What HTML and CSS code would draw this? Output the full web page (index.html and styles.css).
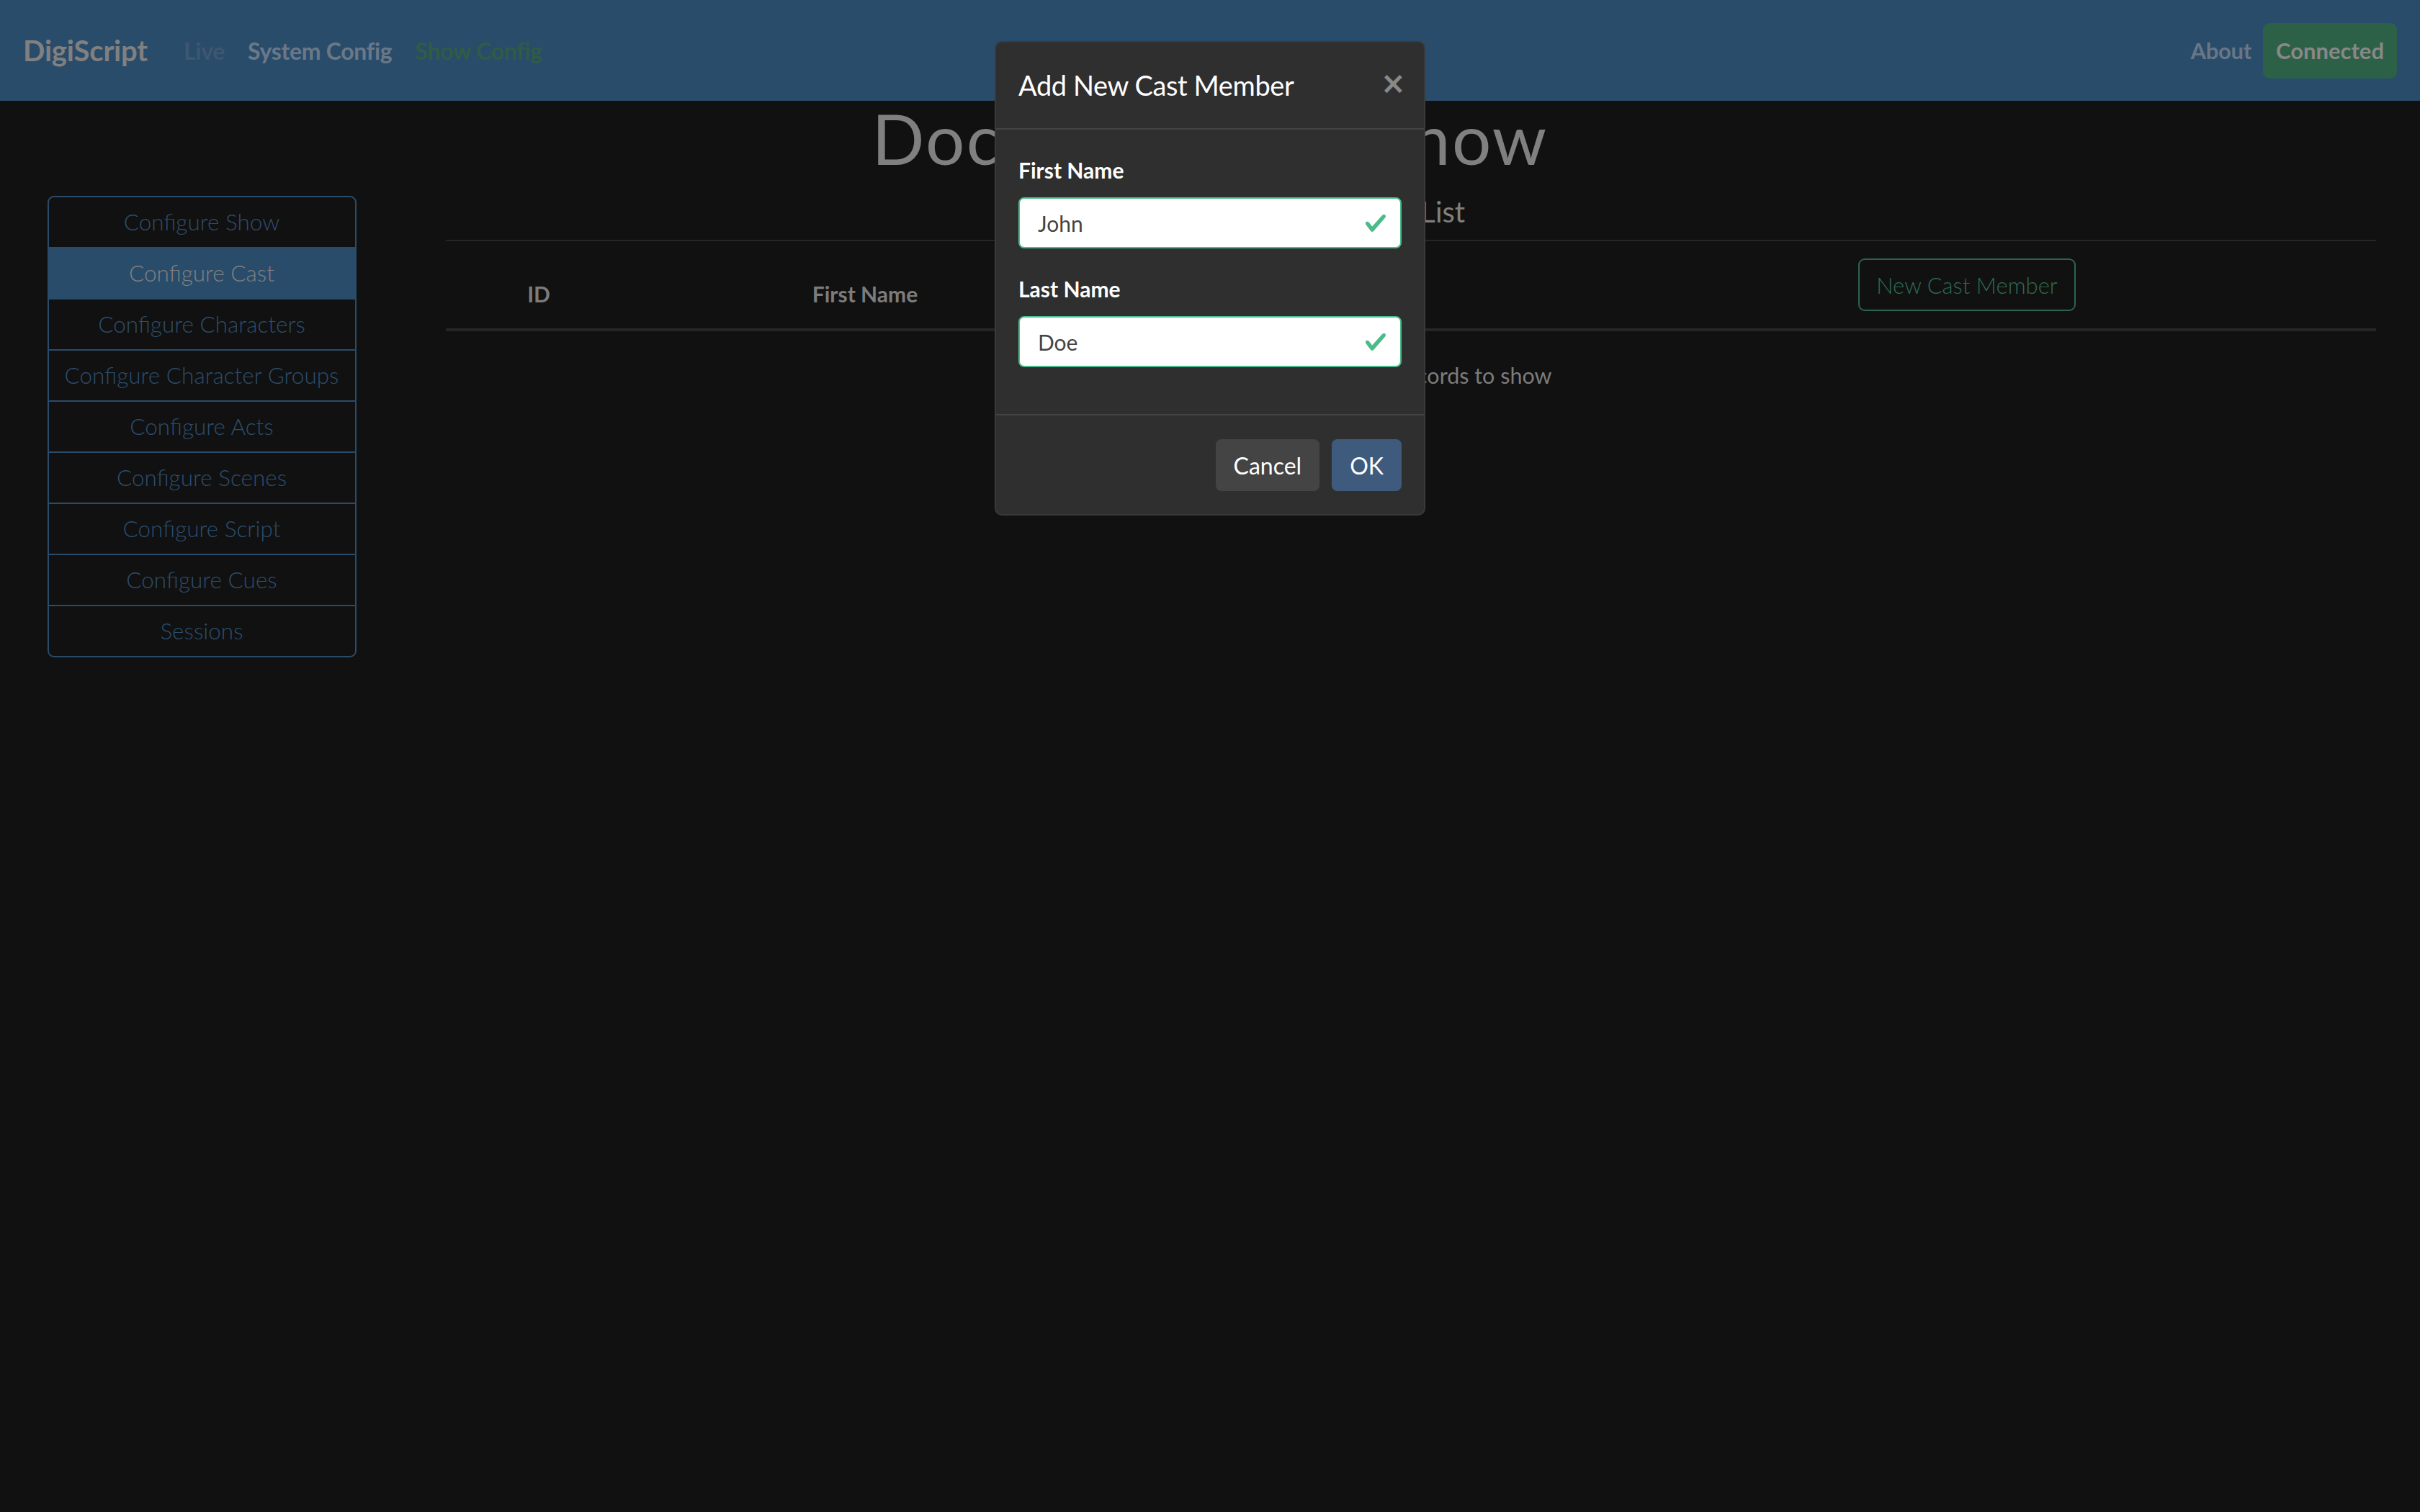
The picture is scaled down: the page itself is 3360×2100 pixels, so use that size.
FILE: index.html
```html
<!DOCTYPE html>
<html lang="en">
<head>
<meta charset="utf-8">
<title>DigiScript</title>
<link rel="stylesheet" href="styles.css">
</head>
<body>
<nav class="navbar">
  <a class="brand">DigiScript</a>
  <ul class="nav-links">
    <li class="nav-link disabled">Live</li>
    <li class="nav-link">System Config</li>
    <li class="nav-link active">Show Config</li>
  </ul>
  <div class="nav-right">
    <span class="nav-link">About</span>
    <button class="btn-connected">Connected</button>
  </div>
</nav>

<main class="page">
  <h1 class="show-title">Doctor Faustus Show</h1>
  <div class="row">
    <aside class="sidebar-col">
      <div class="list-group">
        <a class="list-item">Configure Show</a>
        <a class="list-item active">Configure Cast</a>
        <a class="list-item">Configure Characters</a>
        <a class="list-item">Configure Character Groups</a>
        <a class="list-item">Configure Acts</a>
        <a class="list-item">Configure Scenes</a>
        <a class="list-item">Configure Script</a>
        <a class="list-item">Configure Cues</a>
        <a class="list-item">Sessions</a>
      </div>
    </aside>
    <section class="content-col">
      <h5 class="section-title">Cast List</h5>
      <div class="table">
        <div class="thead">
          <div class="th">ID</div>
          <div class="th">First Name</div>
          <div class="th">Last Name</div>
          <div class="th"><button class="btn-outline-success">New Cast Member</button></div>
        </div>
        <div class="empty-row">There are no records to show</div>
      </div>
    </section>
  </div>
</main>

<div class="modal">
  <div class="modal-content">
    <header class="modal-header">
      <h5 class="modal-title">Add New Cast Member</h5>
      <button class="close">&times;</button>
    </header>
    <div class="modal-body">
      <div class="form-group">
        <label class="form-label">First Name</label>
        <div class="input-wrap">
          <input class="form-control" type="text" value="John">
          <svg class="valid-icon" viewBox="0 0 8 8"><path d="M2.3 6.73L.6 4.53c-.4-1.04.46-1.4 1.1-.8l1.1 1.4 3.4-3.8c.6-.63 1.6-.27 1.2.7l-4 4.6c-.43.5-.8.4-1.1.1z"/></svg>
        </div>
      </div>
      <div class="form-group">
        <label class="form-label">Last Name</label>
        <div class="input-wrap">
          <input class="form-control" type="text" value="Doe">
          <svg class="valid-icon" viewBox="0 0 8 8"><path d="M2.3 6.73L.6 4.53c-.4-1.04.46-1.4 1.1-.8l1.1 1.4 3.4-3.8c.6-.63 1.6-.27 1.2.7l-4 4.6c-.43.5-.8.4-1.1.1z"/></svg>
        </div>
      </div>
    </div>
    <footer class="modal-footer">
      <button class="btn btn-secondary">Cancel</button>
      <button class="btn btn-primary">OK</button>
    </footer>
  </div>
</div>
</body>
</html>
```

FILE: styles.css
```css
* { box-sizing: border-box; }

html, body {
  margin: 0;
  padding: 0;
}

body {
  background: #111111;
  font-family: Lato, "Open Sans", sans-serif;
  color: #808080;
  width: 3360px;
  height: 2100px;
  overflow: hidden;
}

/* Navbar */
.navbar {
  height: 140px;
  background: #2a4c6b;
  display: flex;
  align-items: center;
  padding: 0 32px 0 32px;
}

.brand {
  font-size: 40px;
  font-weight: 700;
  color: #808080;
  margin-right: 34px;
  letter-spacing: -0.2px;
}

.nav-links {
  list-style: none;
  margin: 0;
  padding: 0;
  display: flex;
}

.nav-link {
  font-size: 32px;
  font-weight: 700;
  padding: 0 16px;
  color: #6a7888;
  letter-spacing: -0.3px;
}

.nav-link.disabled { color: #3e5672; }
.nav-link.active { color: #2e5c45; }

.nav-right {
  margin-left: auto;
  display: flex;
  align-items: center;
}

.nav-right .nav-link {
  font-size: 31px;
  padding: 0 16px;
  color: #687686;
}

.btn-connected {
  font-family: inherit;
  font-size: 31px;
  font-weight: 700;
  color: #888888;
  background: #2d6147;
  border: none;
  border-radius: 9px;
  height: 77px;
  padding: 0 18px;
}

/* Page */
.page {
  display: flex;
  flex-direction: column;
}

.show-title {
  margin: 4px 0 0;
  font-size: 96px;
  line-height: 96px;
  font-weight: 400;
  letter-spacing: 2.2px;
  text-align: center;
  color: #808080;
}

.row {
  display: flex;
  margin-top: 30px;
}

.sidebar-col {
  width: 560px;
  display: flex;
  justify-content: center;
  padding-top: 2px;
}

.list-group {
  width: 429px;
  border: 2px solid #2a4c6b;
  border-radius: 9px;
  overflow: hidden;
  display: flex;
  flex-direction: column;
}

.list-item {
  height: 71px;
  display: flex;
  align-items: center;
  justify-content: center;
  padding-bottom: 2px;
  font-size: 31.5px;
  font-weight: 300;
  color: #2c4d6d;
  border-top: 2px solid #2a4c6b;
}

.list-item:first-child {
  border-top: none;
  height: 69px;
}

.list-item.active {
  background: #2a4c6b;
  color: #808080;
}

.content-col {
  width: 2800px;
  padding: 0 61px 0 59px;
  display: flex;
  flex-direction: column;
}

.section-title {
  margin: 0 0 15px;
  font-size: 40px;
  line-height: 48px;
  font-weight: 400;
  text-align: center;
  color: #808080;
}

.table {
  display: flex;
  flex-direction: column;
}

.thead {
  display: grid;
  grid-template-columns: 258px 648px 638px 1fr;
  align-items: end;
  border-top: 2px solid #262626;
  border-bottom: 4px solid #262626;
}

.th {
  padding: 24px 0;
  text-align: center;
  font-size: 30px;
  line-height: 48px;
  font-weight: 700;
  color: #7c7c7c;
}

.btn-outline-success {
  font-family: inherit;
  font-size: 31px;
  font-weight: 300;
  color: #2d6a52;
  background: transparent;
  border: 2px solid #2d6450;
  border-radius: 9px;
  height: 73px;
  width: 302px;
  padding: 0;
}

.empty-row {
  padding: 37px 0 24px;
  text-align: center;
  font-size: 30.5px;
  line-height: 48px;
  color: #7c7c7c;
}

/* Modal */
.modal {
  position: fixed;
  inset: 0;
  display: flex;
  justify-content: center;
  align-items: flex-start;
  padding-top: 57px;
}

.modal-content {
  width: 598px;
  background: #2f2f2f;
  border: 2px solid #3a3a3a;
  border-radius: 10px;
  display: flex;
  flex-direction: column;
}

.modal-header {
  display: flex;
  justify-content: space-between;
  align-items: flex-start;
  padding: 29px 31px 30px 31px;
  border-bottom: 2px solid #444444;
}

.modal-title {
  margin: 0;
  font-size: 38px;
  line-height: 60px;
  font-weight: 400;
  color: #ffffff;
  letter-spacing: -0.4px;
}

.close {
  font-family: "DejaVu Sans", sans-serif;
  background: none;
  border: none;
  padding: 0;
  margin-top: 6px;
  margin-right: -6px;
  font-size: 42px;
  line-height: 44px;
  font-weight: 700;
  color: #898989;
}

.modal-body {
  padding: 32px 31px 33px;
}

.form-group {
  margin-bottom: 32px;
}

.form-label {
  display: block;
  font-size: 30px;
  line-height: 48px;
  font-weight: 700;
  color: #ffffff;
  margin-bottom: 14px;
}

.input-wrap {
  position: relative;
}

.form-control {
  display: block;
  width: 100%;
  height: 71px;
  border: 2px solid #4cbb8a;
  border-radius: 8px;
  background: #ffffff;
  padding: 0 70px 0 25px;
  font-family: inherit;
  font-size: 30px;
  color: #444444;
  outline: none;
}

.valid-icon {
  position: absolute;
  right: 20px;
  top: 20px;
  width: 32px;
  height: 32px;
  fill: #4cbb8a;
}

.modal-footer {
  display: flex;
  justify-content: flex-end;
  gap: 17px;
  padding: 33px 31px 32px;
  border-top: 2px solid #444444;
}

.btn {
  font-family: inherit;
  font-size: 32px;
  font-weight: 400;
  color: #ffffff;
  border: none;
  border-radius: 8px;
  height: 72px;
  padding: 0 25px;
}

.btn-secondary { background: #444444; }
.btn-primary { background: #3e5b7e; }
```
